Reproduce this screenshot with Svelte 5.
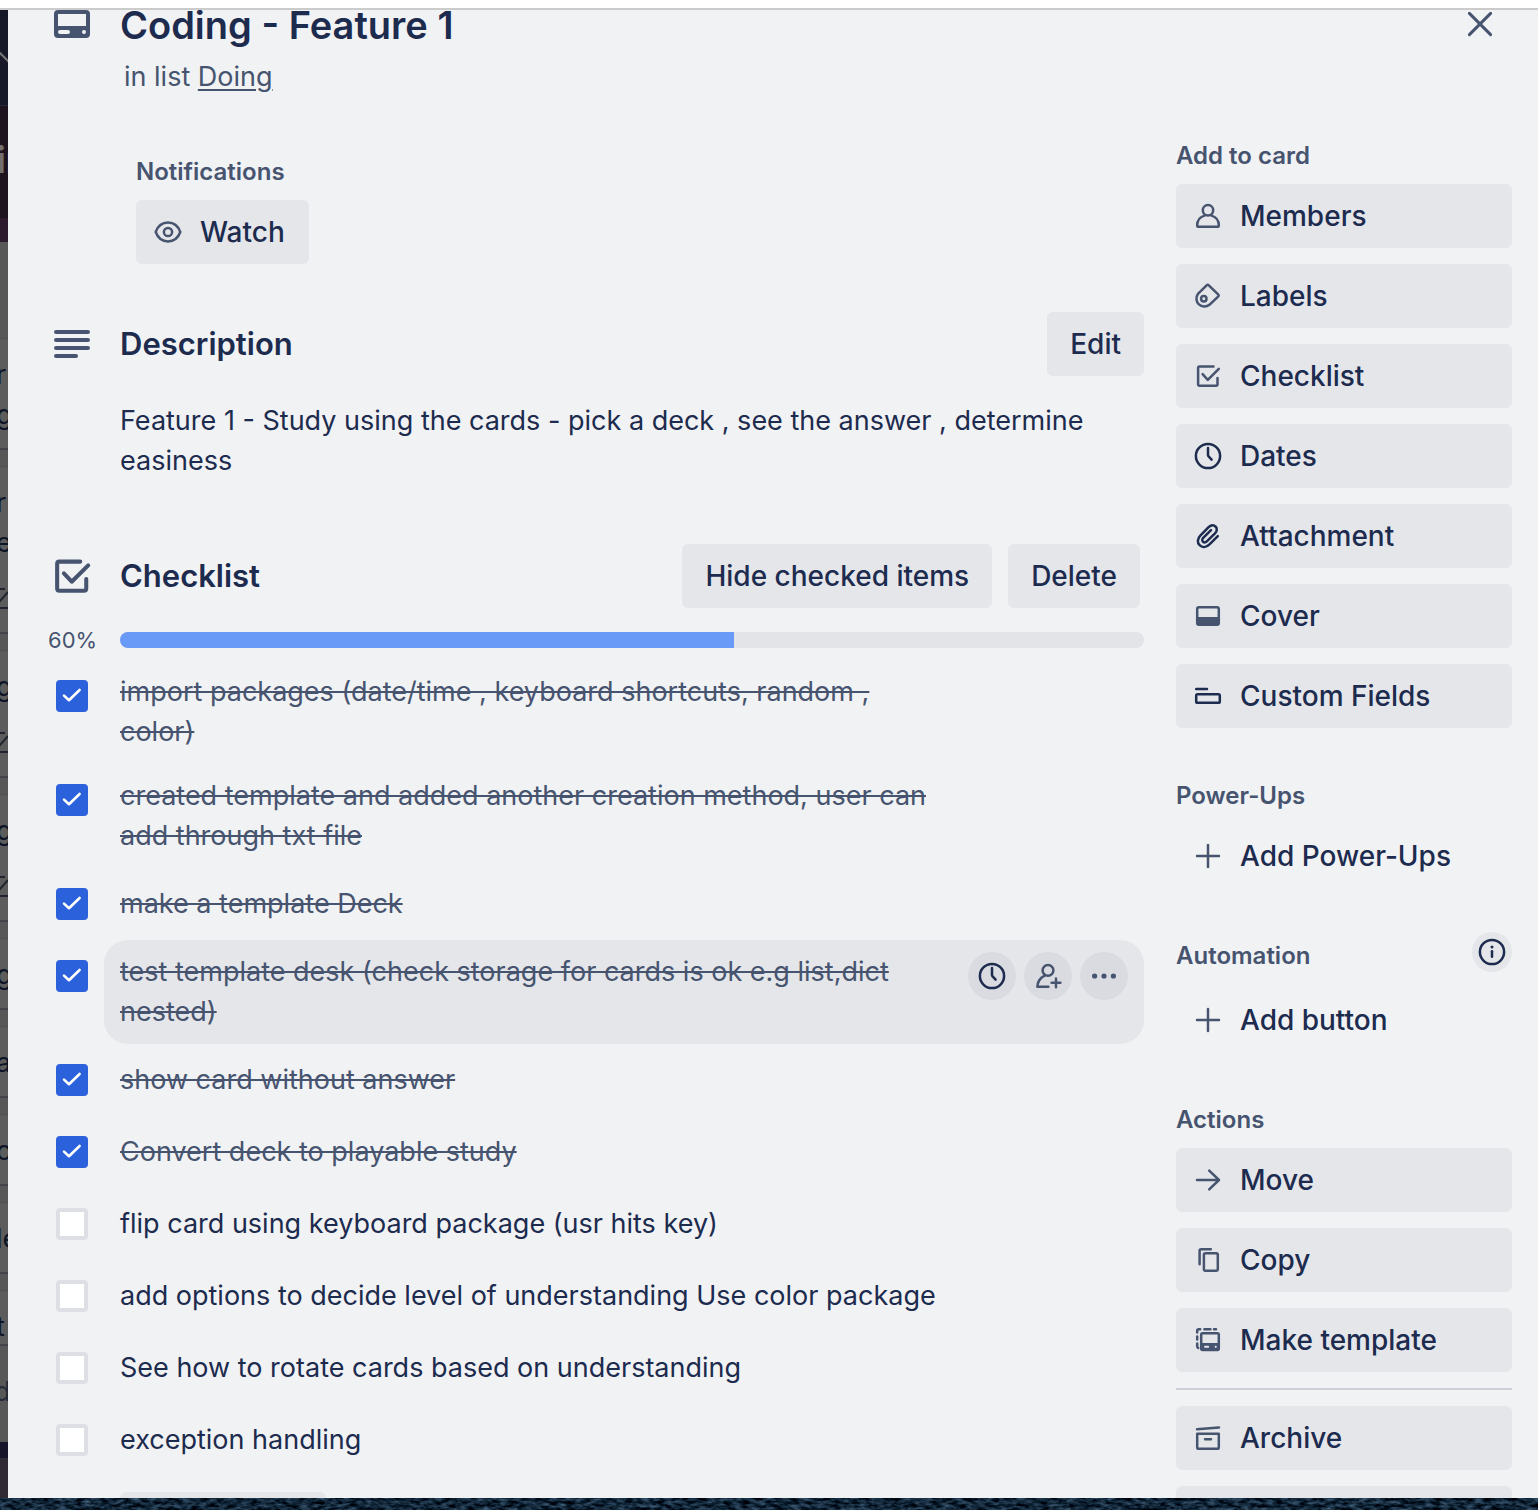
<script>
  let items = $state([
    { text: 'import packages (date/time , keyboard shortcuts, random , color)', done: true },
    { text: 'created template and added another creation method, user can add through txt file', done: true },
    { text: 'make a template Deck', done: true },
    { text: 'test template desk (check storage for cards is ok e.g list,dict nested)', done: true, active: true },
    { text: 'show card without answer', done: true },
    { text: 'Convert deck to playable study', done: true },
    { text: 'flip card using keyboard package (usr hits key)', done: false },
    { text: 'add options to decide level of understanding Use color package', done: false },
    { text: 'See how to rotate cards based on understanding', done: false },
    { text: 'exception handling', done: false }
  ]);
  let percent = $derived(Math.round((items.filter((i) => i.done).length / items.length) * 100));

  const addActions = [
    ['members', 'Members'],
    ['labels', 'Labels'],
    ['checklist', 'Checklist'],
    ['clock', 'Dates'],
    ['attachment', 'Attachment'],
    ['cover', 'Cover'],
    ['fields', 'Custom Fields']
  ];
  const cardActions = [
    ['arrow', 'Move'],
    ['copy', 'Copy'],
    ['template', 'Make template']
  ];
  const darkIcons = ['clock', 'attachment', 'fields', 'info'];

  // Sliver of the board that shows beside the dialog
  const boardCards = [
    { height: 112, lines: ['r', 'g'] },
    { height: 168, lines: ['r', 'e'], badge: true },
    { height: 128, lines: ['g'], badge: true },
    { height: 128, lines: ['g'], badge: true },
    { height: 72, lines: ['g'] },
    { height: 72, lines: ['a'] },
    { height: 72, lines: ['o'] },
    { height: 72, lines: ['le'] },
    { height: 56, lines: ['t'] }
  ];
</script>

{#snippet icon(name)}
  <svg class="icon" class:dark={darkIcons.includes(name)} viewBox="0 0 32 32" aria-hidden="true">
    {#if name === 'members'}
      <circle cx="16" cy="10.3" r="5.2" />
      <path d="M12.4 15.6C8 17 5.2 20.8 5.2 25.2q0 1.6 1.5 1.6h18.6q1.5 0 1.5-1.6c0-4.4-2.8-8.2-7.2-9.6" />
    {:else if name === 'labels'}
      <path d="M14.6 5.4q1.1-1.1 2.2 0l9.3 9q1.1 1.1 0 2.2l-8.7 8.2A8 8 0 0 1 5.9 13.9z" />
      <circle cx="11.8" cy="18.7" r="2.7" />
    {:else if name === 'checklist'}
      <path d="M21.5 6.4H7.6q-1.5 0-1.5 1.5v16.4q0 1.5 1.5 1.5h16.4q1.5 0 1.5-1.5V18" />
      <path d="M10.6 14.2l5.2 5.6L26.8 8.9" />
    {:else if name === 'clock'}
      <circle cx="16" cy="16" r="12.1" />
      <path d="M16 8v7q0 .8.6 1.4l3 3.2" />
    {:else if name === 'attachment'}
      <path d="M25.8 16.2l-8.3 8.1c-3.3 3.3-7.4 3.3-9.9.9s-2.4-6.6.9-9.9L16.6 7.2c2.2-2.2 5-2.5 6.9-.7s1.7 4.7-.5 6.9l-8.2 8c-1.2 1.2-2.8 1.2-3.8.3s-1-2.6.2-3.8l7.8-7.7" />
    {:else if name === 'cover'}
      <rect x="5.2" y="7.3" width="21.6" height="17.4" rx="1.8" />
      <path class="solid" d="M5 17h22v6.5q0 1.5-1.5 1.5h-19Q5 25 5 23.5z" />
    {:else if name === 'fields'}
      <path d="M4.2 9H15" />
      <rect x="4.2" y="14.2" width="23.6" height="8.6" rx="1.4" />
    {:else if name === 'plus'}
      <path d="M16 5v22M5 16h22" />
    {:else if name === 'info'}
      <circle cx="16" cy="16" r="12.1" />
      <path d="M16 15.2v5.6" />
      <circle class="solid" cx="16" cy="11" r="1.5" />
    {:else if name === 'arrow'}
      <path d="M5 16h22M17.2 6.6l9.8 9.4-9.8 9.4" />
    {:else if name === 'copy'}
      <path d="M18.8 5.2H9.2q-1.6 0-1.6 1.6v13.4" />
      <rect x="11.9" y="9.2" width="13.9" height="17.6" rx="1.6" />
    {:else if name === 'template'}
      <rect x="9.2" y="9.2" width="17.6" height="16.8" rx="1.4" />
      <path class="solid" d="M9 19h18v6q0 1.4-1.4 1.4H10.4Q9 26.4 9 25z" />
      <path class="cutout" d="M13 22.8h3.2M23.6 22.8h.2" />
      <path d="M5.2 8.4V6.8q0-1.6 1.6-1.6h1.4M12.4 5.2h6M22 5.2h2M5.2 12.4v3M5.2 19.6v2.6q0 1.2 1 1.8" />
    {:else if name === 'archive'}
      <path d="M5 7.2l22-1.8" />
      <path d="M5.2 11.8h21.6v13.4q0 1.6-1.6 1.6H6.8q-1.6 0-1.6-1.6zM13 17.2h6" />
    {:else if name === 'eye'}
      <path d="M3.7 16C6 9.8 10.8 6.6 16 6.6S26 9.8 28.3 16C26 22.2 21.2 25.4 16 25.4S6 22.2 3.7 16z" />
      <circle cx="16" cy="16" r="4.1" />
    {:else if name === 'assign'}
      <circle cx="16" cy="10.4" r="5.4" />
      <path d="M12.6 15.6C8.4 17.8 5.6 21.2 5.4 26.8H16.4M24 18.4v8.8M19.6 22.8h8.8" />
    {:else if name === 'more'}
      <circle class="solid" cx="6.6" cy="16" r="2.6" />
      <circle class="solid" cx="16" cy="16" r="2.6" />
      <circle class="solid" cx="25.4" cy="16" r="2.6" />
    {/if}
  </svg>
{/snippet}

<div class="screen">
  <div class="browser-edge"></div>
  <div class="stage">
    <div class="board" aria-hidden="true">
      <div class="nav"><svg viewBox="0 0 8 96"><path d="M-1 42L9 52" /></svg></div>
      <div class="board-bar">ir</div>
      <div class="board-gap"></div>
      <div class="list">
        {#each boardCards as card}
          <div class="board-card" style:height="{card.height}px">
            {#each card.lines as line}<span>{line}</span>{/each}
            {#if card.badge}<svg viewBox="0 0 8 24"><path d="M-1 2h6M-1 15l9-10M-1 21h9" /></svg>{/if}
          </div>
        {/each}
        <span class="add">d</span>
      </div>
      <div class="board-foot"></div>
    </div>

    <div class="dialog" role="dialog" aria-labelledby="card-title">
      <header>
        <svg class="card-icon" viewBox="0 0 36 28" aria-hidden="true">
          <path fill-rule="evenodd" d="M4 0h28q4 0 4 4v20q0 4-4 4H4q-4 0-4-4V4q0-4 4-4zM4 4v12h28V4zM6 20a2 2 0 0 0 0 4h8a2 2 0 0 0 0-4zM30 20a2 2 0 1 0 0 4a2 2 0 0 0 0-4z" />
        </svg>
        <h1 id="card-title">Coding - Feature 1</h1>
        <button class="close" aria-label="Close">
          <svg viewBox="0 0 28 28" aria-hidden="true"><path d="M3.4 3.4l21.2 21.2M24.6 3.4L3.4 24.6" /></svg>
        </button>
      </header>
      <p class="in-list">in list <a href="#doing">Doing</a></p>

      <div class="columns">
        <main>
          <section class="notifications">
            <h3>Notifications</h3>
            <button class="btn">{@render icon('eye')}Watch</button>
          </section>

          <section class="description">
            <div class="section-head">
              <svg class="lines-icon" viewBox="0 0 36 28" aria-hidden="true">
                <path d="M2 2h32M2 10h32M2 18h32M2 26h20" />
              </svg>
              <h2>Description</h2>
              <button class="btn plain">Edit</button>
            </div>
            <p>Feature 1 - Study using the cards - pick a deck , see the answer , determine easiness</p>
          </section>

          <section class="checklist">
            <div class="section-head">
              <span class="head-icon">{@render icon('checklist')}</span>
              <h2>Checklist</h2>
              <div class="head-actions">
                <button class="btn plain">Hide checked items</button>
                <button class="btn plain">Delete</button>
              </div>
            </div>
            <div class="progress">
              <span>{percent}%</span>
              <div class="track" role="progressbar" aria-label="Checklist progress" aria-valuenow={percent} aria-valuemin="0" aria-valuemax="100">
                <div class="fill" style:width="{percent}%"></div>
              </div>
            </div>
            <ul>
              {#each items as item, i}
                <li>
                  <span class="check">
                    <input type="checkbox" id="item-{i}" bind:checked={item.done} />
                    <svg viewBox="0 0 32 32" aria-hidden="true"><path d="M8 15.6l5 4.6L23.6 10" /></svg>
                  </span>
                  <div class="row" class:active={item.active}>
                    <label for="item-{i}" class:done={item.done}>{item.text}</label>
                    {#if item.active}
                      <div class="tools">
                        <button aria-label="Set due date">{@render icon('clock')}</button>
                        <button aria-label="Assign">{@render icon('assign')}</button>
                        <button aria-label="More">{@render icon('more')}</button>
                      </div>
                    {/if}
                  </div>
                </li>
              {/each}
            </ul>
            <button class="btn add-item" aria-label="Add an item"></button>
          </section>
        </main>

        <aside>
          <section>
            <h3>Add to card</h3>
            <div class="stack">
              {#each addActions as [name, label]}
                <button class="btn">{@render icon(name)}{label}</button>
              {/each}
            </div>
          </section>
          <section>
            <h3>Power-Ups</h3>
            <button class="btn ghost">{@render icon('plus')}Add Power-Ups</button>
          </section>
          <section class="automation">
            <div class="with-info">
              <h3>Automation</h3>
              <button class="info" aria-label="About automation">{@render icon('info')}</button>
            </div>
            <button class="btn ghost">{@render icon('plus')}Add button</button>
          </section>
          <section>
            <h3>Actions</h3>
            <div class="stack">
              {#each cardActions as [name, label]}
                <button class="btn">{@render icon(name)}{label}</button>
              {/each}
              <hr />
              <button class="btn">{@render icon('archive')}Archive</button>
              <button class="btn" aria-label="Share"></button>
            </div>
          </section>
        </aside>
      </div>
    </div>
  </div>
  <svg class="wallpaper" aria-hidden="true">
    <filter id="sea" x="0" y="0" width="100%" height="100%" color-interpolation-filters="sRGB">
      <feTurbulence type="fractalNoise" baseFrequency="0.12 0.3" numOctaves="4" seed="7" />
      <feColorMatrix values="0.5 0 0 0 -0.18  0.6 0 0 0 -0.15  0.7 0 0 0 -0.13  0 0 0 0 1" />
    </filter>
    <rect width="100%" height="100%" filter="url(#sea)" />
  </svg>
</div>

<style>
  :global(body) {
    margin: 0;
  }
  .screen {
    --ink: #1c2b4e;
    --subtle: #47546f;
    --button: #e4e6ea;
    display: flex;
    flex-direction: column;
    height: 100vh;
    overflow: hidden;
    font-family: Inter, sans-serif;
    font-size: 27px;
    line-height: 40px;
    color: var(--ink);
  }
  .screen :is(h1, h2, h3, p, ul) {
    margin: 0;
    padding: 0;
  }
  button {
    font: inherit;
    color: inherit;
    border: 0;
    padding: 0;
    cursor: pointer;
  }
  .browser-edge {
    flex: none;
    height: 8px;
    background: #fff;
    border-bottom: 2px solid #cbcbcb;
  }
  .stage {
    flex: 1;
    min-height: 0;
    display: flex;
  }
  .wallpaper {
    flex: none;
    display: block;
    width: 100%;
    height: 12px;
    background: #0b1f2d;
  }

  .board {
    flex: none;
    width: 8px;
    overflow: hidden;
    display: flex;
    flex-direction: column;
    background: #575757;
    color: #0c1426;
    white-space: nowrap;
  }
  .board svg {
    display: block;
    width: 8px;
    fill: none;
    stroke: #20242e;
    stroke-width: 2;
  }
  .nav {
    height: 95px;
    background: #181928;
    border-bottom: 1px solid #262636;
  }
  .board .nav svg {
    stroke: #777;
  }
  .board-bar {
    height: 112px;
    line-height: 108px;
    background: #1e1420;
    color: #74706f;
    font-size: 36px;
    font-weight: 700;
    text-indent: -4px;
  }
  .board-gap {
    height: 24px;
    background: #2d1a2d;
  }
  .list {
    flex: 1;
    display: flex;
    flex-direction: column;
    gap: 16px;
    padding-top: 96px;
    background: #575757;
  }
  .board-card {
    box-sizing: border-box;
    flex: none;
    padding-top: 16px;
    background: #5c5c5c;
    border-top: 1px solid #505050;
    border-bottom: 2px solid #434448;
  }
  .board-card span {
    display: block;
    text-indent: -4px;
  }
  .board-card svg {
    height: 24px;
    margin-top: 24px;
  }
  .add {
    padding-top: 10px;
    text-indent: -6px;
    color: #252b38;
  }
  .board-foot {
    box-sizing: border-box;
    height: 56px;
    background: #302a35;
    border-top: 16px solid #151428;
  }

  .dialog {
    flex: 1;
    min-width: 0;
    overflow: hidden;
    padding: 0 26px 0 40px;
    background: #f1f2f4;
  }
  header {
    display: flex;
    align-items: flex-start;
    height: 31px;
  }
  .card-icon,
  .lines-icon {
    flex: none;
    width: 36px;
    height: 28px;
    margin: 0 30px 0 6px;
  }
  .card-icon {
    fill: var(--subtle);
  }
  .lines-icon {
    stroke: var(--subtle);
    stroke-width: 4;
    stroke-linecap: round;
  }
  h1 {
    flex: 1;
    font-size: 38px;
    font-weight: 600;
    line-height: 30px;
  }
  .close {
    display: grid;
    place-items: center;
    width: 64px;
    height: 28px;
    background: none;
  }
  .close svg {
    width: 28px;
    height: 28px;
    stroke: var(--subtle);
    stroke-width: 3;
    stroke-linecap: round;
  }
  .screen .in-list {
    margin: 16px 0 0 76px;
    color: var(--subtle);
  }
  .in-list a {
    color: inherit;
    text-decoration: underline;
    text-decoration-thickness: 2px;
    text-underline-offset: 3px;
  }
  .columns {
    display: flex;
    gap: 32px;
    margin-top: 39px;
  }
  main {
    flex: 1;
    min-width: 0;
    padding-top: 16px;
  }
  h2 {
    flex: 1;
    font-size: 31px;
    font-weight: 600;
  }
  h3 {
    font-size: 24px;
    font-weight: 600;
    color: var(--subtle);
  }
  .icon {
    flex: none;
    width: 32px;
    height: 32px;
    fill: none;
    stroke: var(--subtle);
    stroke-width: 2.5;
    stroke-linecap: round;
    stroke-linejoin: round;
  }
  .icon.dark {
    stroke: var(--ink);
  }
  .icon .solid {
    fill: var(--subtle);
    stroke: none;
  }
  .icon.dark .solid {
    fill: var(--ink);
  }
  .icon .cutout {
    stroke: var(--button);
    stroke-width: 2;
  }
  .btn {
    display: flex;
    align-items: center;
    gap: 16px;
    height: 64px;
    padding: 0 24px 0 16px;
    border-radius: 6px;
    background: var(--button);
    font-size: 28px;
    font-weight: 500;
    white-space: nowrap;
  }
  .btn.plain {
    padding: 0 23px;
  }
  .btn.ghost {
    background: none;
  }
  .notifications {
    padding-left: 88px;
  }
  .notifications .btn {
    margin-top: 8px;
  }
  .section-head {
    display: flex;
    align-items: center;
    height: 64px;
  }
  .description {
    margin-top: 48px;
  }
  .screen .description p {
    margin: 25px 0 0 72px;
  }
  .checklist {
    margin-top: 63px;
  }
  .head-icon {
    display: flex;
    margin-right: 24px;
  }
  .head-icon .icon {
    width: 48px;
    height: 48px;
    stroke-width: 2.7;
  }
  .head-actions {
    display: flex;
    gap: 16px;
    padding-right: 4px;
  }
  .progress {
    display: flex;
    align-items: center;
    gap: 24px;
    height: 16px;
    margin-top: 24px;
  }
  .progress span {
    width: 48px;
    font-size: 22px;
    text-align: center;
    color: var(--subtle);
  }
  .track {
    flex: 1;
    height: 16px;
    border-radius: 8px;
    overflow: hidden;
    background: #e3e4e8;
  }
  .fill {
    height: 100%;
    background: #6a9af8;
  }
  .screen ul {
    margin-top: 12px;
    list-style: none;
  }
  li {
    display: flex;
    gap: 16px;
    padding-left: 8px;
  }
  .check {
    flex: none;
    display: grid;
    width: 32px;
    height: 32px;
    margin-top: 20px;
  }
  .check > * {
    grid-area: 1 / 1;
  }
  .check input {
    appearance: none;
    box-sizing: border-box;
    width: 32px;
    height: 32px;
    margin: 0;
    border: 4px solid #dddfe5;
    border-radius: 4px;
    background: #fff;
  }
  .check input:checked {
    border-color: #2c61dc;
    background: #2c61dc;
  }
  .check svg {
    visibility: hidden;
    pointer-events: none;
    fill: none;
    stroke: #fff;
    stroke-width: 2.6;
    stroke-linecap: round;
    stroke-linejoin: round;
  }
  .check input:checked + svg {
    visibility: visible;
  }
  .row {
    flex: 1;
    box-sizing: border-box;
    display: flex;
    align-items: center;
    justify-content: space-between;
    min-height: 72px;
    padding: 12px 16px;
    border-radius: 24px;
  }
  .row.active {
    background: var(--button);
  }
  label {
    max-width: 824px;
  }
  label.done {
    color: var(--subtle);
    text-decoration: line-through;
    text-decoration-thickness: 2px;
  }
  .tools {
    align-self: flex-start;
    display: flex;
    gap: 8px;
  }
  .tools button {
    display: grid;
    place-items: center;
    width: 48px;
    height: 48px;
    border-radius: 50%;
    background: #d9dbe0;
  }
  .add-item {
    width: 206px;
    margin: 16px 0 0 72px;
  }

  aside {
    flex: none;
    width: 336px;
  }
  aside section + section {
    margin-top: 48px;
  }
  aside section.automation {
    margin-top: 44px;
  }
  .screen aside h3 {
    margin-bottom: 8px;
  }
  aside .btn {
    width: 100%;
  }
  .stack {
    display: flex;
    flex-direction: column;
    gap: 16px;
  }
  .with-info {
    display: flex;
    justify-content: space-between;
  }
  .with-info h3 {
    line-height: 48px;
  }
  .info {
    display: grid;
    place-items: center;
    width: 40px;
    height: 40px;
    border-radius: 50%;
    background: var(--button);
  }
  hr {
    width: 100%;
    height: 2px;
    margin: 0;
    border: 0;
    background: #cdd0d8;
  }
</style>
